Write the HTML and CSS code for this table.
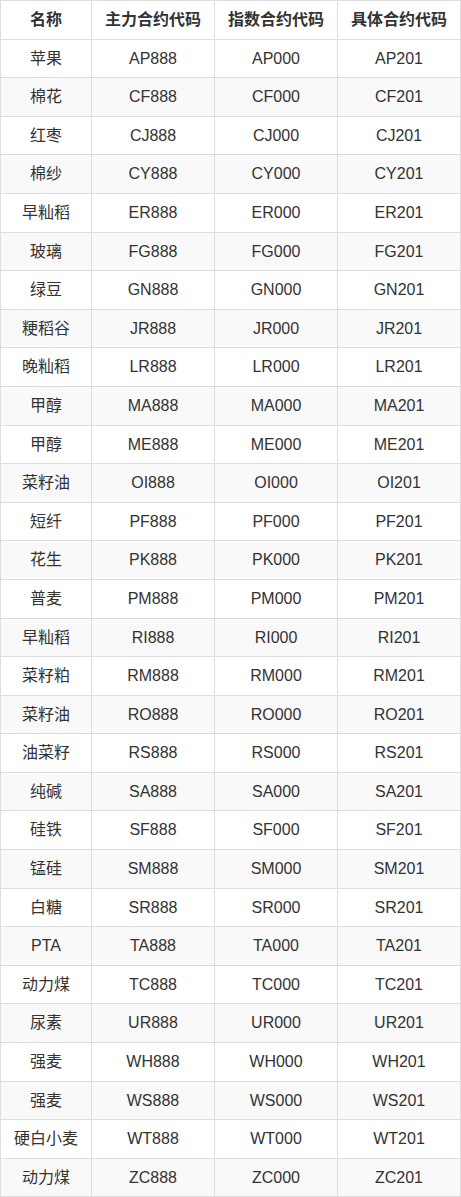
FILE: index.html
```html
<!DOCTYPE html>
<html>
<head>
<meta charset="utf-8">
<link rel="stylesheet" href="styles.css">
</head>
<body>
<table class="codes">
<colgroup><col class="c-name"><col class="c-code"><col class="c-code"><col class="c-code"></colgroup>
<thead>
<tr><th>名称</th><th>主力合约代码</th><th>指数合约代码</th><th>具体合约代码</th></tr>
</thead>
<tbody>
<tr><td>苹果</td><td>AP888</td><td>AP000</td><td>AP201</td></tr>
<tr><td>棉花</td><td>CF888</td><td>CF000</td><td>CF201</td></tr>
<tr><td>红枣</td><td>CJ888</td><td>CJ000</td><td>CJ201</td></tr>
<tr><td>棉纱</td><td>CY888</td><td>CY000</td><td>CY201</td></tr>
<tr><td>早籼稻</td><td>ER888</td><td>ER000</td><td>ER201</td></tr>
<tr><td>玻璃</td><td>FG888</td><td>FG000</td><td>FG201</td></tr>
<tr><td>绿豆</td><td>GN888</td><td>GN000</td><td>GN201</td></tr>
<tr><td>粳稻谷</td><td>JR888</td><td>JR000</td><td>JR201</td></tr>
<tr><td>晚籼稻</td><td>LR888</td><td>LR000</td><td>LR201</td></tr>
<tr><td>甲醇</td><td>MA888</td><td>MA000</td><td>MA201</td></tr>
<tr><td>甲醇</td><td>ME888</td><td>ME000</td><td>ME201</td></tr>
<tr><td>菜籽油</td><td>OI888</td><td>OI000</td><td>OI201</td></tr>
<tr><td>短纤</td><td>PF888</td><td>PF000</td><td>PF201</td></tr>
<tr><td>花生</td><td>PK888</td><td>PK000</td><td>PK201</td></tr>
<tr><td>普麦</td><td>PM888</td><td>PM000</td><td>PM201</td></tr>
<tr><td>早籼稻</td><td>RI888</td><td>RI000</td><td>RI201</td></tr>
<tr><td>菜籽粕</td><td>RM888</td><td>RM000</td><td>RM201</td></tr>
<tr><td>菜籽油</td><td>RO888</td><td>RO000</td><td>RO201</td></tr>
<tr><td>油菜籽</td><td>RS888</td><td>RS000</td><td>RS201</td></tr>
<tr><td>纯碱</td><td>SA888</td><td>SA000</td><td>SA201</td></tr>
<tr><td>硅铁</td><td>SF888</td><td>SF000</td><td>SF201</td></tr>
<tr><td>锰硅</td><td>SM888</td><td>SM000</td><td>SM201</td></tr>
<tr><td>白糖</td><td>SR888</td><td>SR000</td><td>SR201</td></tr>
<tr><td>PTA</td><td>TA888</td><td>TA000</td><td>TA201</td></tr>
<tr><td>动力煤</td><td>TC888</td><td>TC000</td><td>TC201</td></tr>
<tr><td>尿素</td><td>UR888</td><td>UR000</td><td>UR201</td></tr>
<tr><td>强麦</td><td>WH888</td><td>WH000</td><td>WH201</td></tr>
<tr><td>强麦</td><td>WS888</td><td>WS000</td><td>WS201</td></tr>
<tr><td>硬白小麦</td><td>WT888</td><td>WT000</td><td>WT201</td></tr>
<tr><td>动力煤</td><td>ZC888</td><td>ZC000</td><td>ZC201</td></tr>
</tbody>
</table>
</body>
</html>
```

FILE: styles.css
```css
html, body {
  margin: 0;
  padding: 0;
  background: #fff;
}
body {
  font-family: "Liberation Sans", Arial, "Noto Sans CJK SC", sans-serif;
  font-size: 16px;
  color: #333;
}
.codes {
  width: 461px;
  border-collapse: collapse;
  table-layout: fixed;
}
.c-name { width: 91px; }
.c-code { width: 123px; }
.codes th,
.codes td {
  border: 1px solid #ddd;
  padding: 8px 4px;
  line-height: 21.6px;
  text-align: center;
  vertical-align: middle;
  white-space: nowrap;
}
.codes th {
  font-weight: bold;
}
.codes tbody tr:nth-child(even) td {
  background: #f9f9f9;
}
```
